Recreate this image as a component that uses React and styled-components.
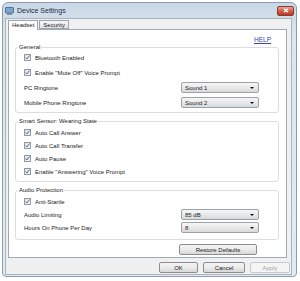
import React from 'react';
import styled, { createGlobalStyle } from 'styled-components';

const GlobalStyle = createGlobalStyle`
  body {
    margin: 0;
    background: #ffffff;
    font-family: "Liberation Sans", Arial, sans-serif;
  }
`;

const Window = styled.div`
  box-sizing: border-box;
  margin: 2px 0 0 2px;
  width: 295px;
  padding: 0 4px 1px 1px;
  border: 1px solid #8d9db0;
  border-radius: 6px 6px 4px 4px;
  background: linear-gradient(180deg, #c9d8e6 0%, #dbe6ef 12%, #e2ebf2 100%);
`;

const TitleBar = styled.div`
  height: 15px;
  display: flex;
  align-items: center;
`;

const TitleIcon = styled.svg`
  margin-left: 1px;
  width: 9px;
  height: 8px;
`;

const Title = styled.div`
  margin-left: 3px;
  font-size: 7px;
  color: #1c2c48;
`;

const CloseButton = styled.div`
  box-sizing: border-box;
  margin-left: auto;
  margin-right: -2px;
  width: 17px;
  height: 10px;
  border: 1px solid #8b3a2c;
  border-radius: 2px;
  background: linear-gradient(180deg, #e8a595 0%, #d0604a 50%, #b8381f 100%);
  display: flex;
  align-items: center;
  justify-content: center;
`;

const Client = styled.div`
  box-sizing: border-box;
  margin-left: 1px;
  padding: 1px 1px 1px 1px;
  border: 1px solid #a7b5c3;
  background: #f0f0f0;
`;

const TabRow = styled.div`
  height: 10px;
  margin-bottom: -1px;
  margin-left: 1px;
  display: flex;
  align-items: flex-end;
  position: relative;
  z-index: 1;
`;

const Tab = styled.div`
  box-sizing: border-box;
  height: ${p => (p.$active ? '10px' : '9px')};
  margin-bottom: ${p => (p.$active ? '0' : '1px')};
  padding: 0 3px;
  border: 1px solid #9aa5b1;
  border-bottom: ${p => (p.$active ? 'none' : '1px solid #9aa5b1')};
  background: ${p => (p.$active ? '#ffffff' : 'linear-gradient(180deg, #f6f6f6, #e3e3e3)')};
  font-size: 6px;
  line-height: 8px;
  color: #222;
  margin-right: 1px;
`;

const Panel = styled.div`
  box-sizing: border-box;
  margin-left: 1px;
  margin-right: 3px;
  padding: 6px 7px 2px 6px;
  border: 1px solid #a0aab4;
  background: #ffffff;
  display: flex;
  flex-direction: column;
`;

const HelpRow = styled.div`
  height: 8px;
  display: flex;
  justify-content: flex-end;
  padding-right: 8px;
`;

const HelpLink = styled.a`
  font-size: 6.5px;
  line-height: 8px;
  color: #3446a4;
  text-decoration: underline;
`;

const Group = styled.fieldset`
  margin: ${p => p.$top}px 0 0 0;
  padding: ${p => p.$pt}px 19px ${p => p.$pb}px 8px;
  border: 1px solid #dadde2;
  border-radius: 3px;
  min-width: 0;
`;

const Legend = styled.legend`
  margin-left: -6px;
  padding: 0 1px;
  font-size: 6px;
  line-height: 6px;
  color: #222;
`;

const Row = styled.div`
  height: ${p => p.$h}px;
  display: flex;
  align-items: center;
  font-size: 6px;
  color: #222;
`;

const Box = styled.span`
  box-sizing: border-box;
  width: 7px;
  height: 7px;
  margin-right: 4px;
  border: 1px solid #8f9aa7;
  background: linear-gradient(135deg, #dfe4ea, #f3f5f8);
  display: flex;
  align-items: center;
  justify-content: center;
`;

const Select = styled.div`
  box-sizing: border-box;
  margin-left: auto;
  width: 78px;
  height: 11px;
  padding: 0 3px;
  border: 1px solid #9aa2ab;
  border-radius: 2px;
  background: linear-gradient(180deg, #f6f6f6 0%, #e9e9e9 50%, #d9d9d9 100%);
  display: flex;
  align-items: center;
  justify-content: space-between;
  font-size: 6px;
  color: #222;
`;

const Arrow = styled.span`
  width: 0;
  height: 0;
  margin-right: 1px;
  border-left: 2px solid transparent;
  border-right: 2px solid transparent;
  border-top: 2px solid #111;
`;

const Button = styled.div`
  box-sizing: border-box;
  width: ${p => p.$w}px;
  height: 11px;
  border: 1px solid ${p => (p.$disabled ? '#c6c9cc' : '#8d8d8d')};
  border-radius: 2px;
  background: ${p => (p.$disabled ? '#f4f4f4' : 'linear-gradient(180deg, #f4f4f4 0%, #ebebeb 50%, #d8d8d8 100%)')};
  display: flex;
  align-items: center;
  justify-content: center;
  font-size: 6px;
  color: ${p => (p.$disabled ? '#a6a6a6' : '#222')};
`;

const RestoreRow = styled.div`
  margin-top: 4px;
  display: flex;
  justify-content: flex-end;
  padding-right: 22px;
`;

const ButtonRow = styled.div`
  margin-top: 4px;
  display: flex;
  justify-content: flex-end;
  gap: 5px;
`;

const Check = ({ label }) => (
  <>
    <Box>
      <svg width="5" height="5" viewBox="0 0 5 5">
        <path d="M0.6 2.6 L1.9 4 L4.4 0.6" fill="none" stroke="#4a5878" strokeWidth="0.9" />
      </svg>
    </Box>
    {label}
  </>
);

const Dropdown = ({ value }) => (
  <Select>
    <span>{value}</span>
    <Arrow />
  </Select>
);

export default function App() {
  return (
    <>
      <GlobalStyle />
      <Window>
        <TitleBar>
          <TitleIcon viewBox="0 0 9 8">
            <rect x="0.5" y="0.5" width="8" height="5.5" rx="0.5" fill="#7fa6cc" stroke="#3f5f86" strokeWidth="0.8" />
            <rect x="2" y="6.5" width="5" height="1.2" fill="#5a6f88" />
          </TitleIcon>
          <Title>Device Settings</Title>
          <CloseButton>
            <svg width="6" height="5" viewBox="0 0 6 5">
              <path d="M1 0.8 L5 4.2 M5 0.8 L1 4.2" stroke="#ffffff" strokeWidth="1.2" />
            </svg>
          </CloseButton>
        </TitleBar>
        <Client>
          <TabRow>
            <Tab $active>Headset</Tab>
            <Tab>Security</Tab>
          </TabRow>
          <Panel>
            <HelpRow>
              <HelpLink>HELP</HelpLink>
            </HelpRow>

            <Group $top={0} $pt={0} $pb={2}>
              <Legend>General</Legend>
              <Row $h={15}><Check label="Bluetooth Enabled" /></Row>
              <Row $h={15}><Check label={'Enable "Mute Off" Voice Prompt'} /></Row>
              <Row $h={15}>PC Ringtone<Dropdown value="Sound 1" /></Row>
              <Row $h={15}>Mobile Phone Ringtone<Dropdown value="Sound 2" /></Row>
            </Group>

            <Group $top={5} $pt={2} $pb={3}>
              <Legend>Smart Sensor: Wearing State</Legend>
              <Row $h={13}><Check label="Auto Call Answer" /></Row>
              <Row $h={13}><Check label="Auto Call Transfer" /></Row>
              <Row $h={13}><Check label="Auto Pause" /></Row>
              <Row $h={13}><Check label={'Enable "Answering" Voice Prompt'} /></Row>
            </Group>

            <Group $top={5} $pt={2} $pb={5}>
              <Legend>Audio Protection</Legend>
              <Row $h={13}><Check label="Anti-Startle" /></Row>
              <Row $h={13}>Audio Limiting<Dropdown value="85 dB" /></Row>
              <Row $h={13}>Hours On Phone Per Day<Dropdown value="8" /></Row>
            </Group>

            <RestoreRow>
              <Button $w={78}>Restore Defaults</Button>
            </RestoreRow>
          </Panel>
          <ButtonRow>
            <Button $w={39}>OK</Button>
            <Button $w={42}>Cancel</Button>
            <Button $w={40} $disabled>Apply</Button>
          </ButtonRow>
        </Client>
      </Window>
    </>
  );
}
